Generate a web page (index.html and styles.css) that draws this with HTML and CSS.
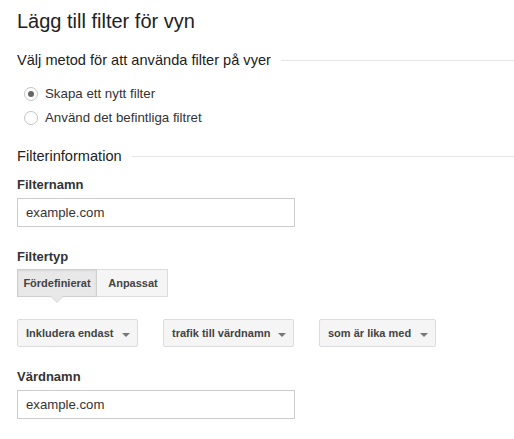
FILE: index.html
```html
<!DOCTYPE html>
<html lang="sv">
<head>
<meta charset="utf-8">
<title>Lägg till filter för vyn</title>
<link rel="stylesheet" href="styles.css">
</head>
<body>
<div class="page">
  <h1 class="title">Lägg till filter för vyn</h1>

  <div class="section-head section-head-first"><span class="section-text">Välj metod för att använda filter på vyer</span><span class="section-line"></span></div>
  <div class="radios">
    <label class="radio-row"><span class="radio radio-checked"></span><span>Skapa ett nytt filter</span></label>
    <label class="radio-row"><span class="radio"></span><span>Använd det befintliga filtret</span></label>
  </div>

  <div class="section-head section-head-second"><span class="section-text">Filterinformation</span><span class="section-line"></span></div>

  <div class="label label-first">Filternamn</div>
  <input class="text-input" type="text" value="example.com">

  <div class="label label-gap">Filtertyp</div>
  <div class="tabs">
    <span class="tab tab-active tab-pre">Fördefinierat</span>
    <span class="tab tab-custom">Anpassat</span>
  </div>

  <div class="selects">
    <div class="select select-a"><span>Inkludera endast</span><span class="caret"></span></div>
    <div class="select select-b"><span>trafik till värdnamn</span><span class="caret"></span></div>
    <div class="select select-c"><span>som är lika med</span><span class="caret"></span></div>
  </div>

  <div class="label label-gap">Värdnamn</div>
  <input class="text-input" type="text" value="example.com">
</div>
</body>
</html>
```

FILE: styles.css
```css
* { box-sizing: border-box; }
html, body { margin: 0; padding: 0; background: #fff; }
body {
  font-family: "Liberation Sans", Arial, sans-serif;
  color: #333;
}
.page {
  padding: 9px 0 0 17px;
}
.title {
  margin: 0;
  font-size: 20px;
  line-height: 24px;
  font-weight: normal;
  color: #222;
}
.section-head {
  display: flex;
  align-items: center;
  font-size: 14.6px;
  line-height: 20px;
  color: #222;
}
.section-head-first { margin-top: 17px; }
.section-head-second { margin-top: 16px; }
.section-line {
  flex: 1;
  height: 0;
  border-top: 1px solid #e5e5e5;
  margin-left: 10px;
}
.radios {
  margin-top: 12px;
  padding-left: 7px;
}
.radio-row {
  display: flex;
  align-items: center;
  height: 24px;
  font-size: 13.3px;
  line-height: 24px;
  color: #333;
}
.radio {
  width: 14px;
  height: 14px;
  border: 1px solid #c4c4c4;
  border-radius: 50%;
  background: #fff;
  margin-right: 7px;
  display: flex;
  align-items: center;
  justify-content: center;
}
.radio-checked::after {
  content: "";
  width: 6px;
  height: 6px;
  border-radius: 50%;
  background: #666;
}
.label {
  font-size: 13px;
  line-height: 20px;
  font-weight: bold;
  color: #333;
}
.label-first { margin-top: 9px; }
.label-gap { margin-top: 20px; }
.text-input {
  display: block;
  margin: 3px 0 0 0;
  width: 278px;
  height: 29px;
  border: 1px solid #ccc;
  padding: 0 8px;
  font-family: "Liberation Sans", Arial, sans-serif;
  font-size: 13.2px;
  color: #333;
  background: #fff;
  outline: none;
}
.tabs {
  display: flex;
  margin-top: 2px;
}
.tab {
  position: relative;
  height: 28px;
  line-height: 26px;
  font-size: 11px;
  font-weight: bold;
  color: #444;
  text-align: center;
  background: #f5f5f5;
  border: 1px solid #dcdcdc;
}
.tab-pre { width: 80px; }
.tab-custom { width: 71px; border-left: none; padding-left: 2px; }
.tab-active {
  background: #e8e8e8;
  border-color: #cfcfcf;
  box-shadow: inset 0 1px 2px rgba(0,0,0,0.08);
}
.tab-active::before,
.tab-active::after {
  content: "";
  position: absolute;
  left: 50%;
  width: 0;
  height: 0;
  border-style: solid;
}
.tab-active::before {
  bottom: -7px;
  margin-left: -7px;
  border-width: 7px 7px 0 7px;
  border-color: #d6d6d6 transparent transparent transparent;
}
.tab-active::after {
  bottom: -6px;
  margin-left: -6px;
  border-width: 6px 6px 0 6px;
  border-color: #e8e8e8 transparent transparent transparent;
}
.selects {
  display: flex;
  gap: 25px;
  margin-top: 22px;
}
.select {
  display: flex;
  align-items: center;
  height: 28px;
  padding: 0 7px 0 8px;
  font-size: 11px;
  font-weight: bold;
  color: #444;
  background: #f5f5f5;
  border: 1px solid #dcdcdc;
  border-radius: 2px;
  justify-content: space-between;
}
.select-a { width: 121px; }
.select-b { width: 131px; }
.select-c { width: 117px; }
.caret {
  width: 0;
  height: 0;
  margin-top: 3px;
  border-style: solid;
  border-width: 4px 4px 0 4px;
  border-color: #777 transparent transparent transparent;
}
```
